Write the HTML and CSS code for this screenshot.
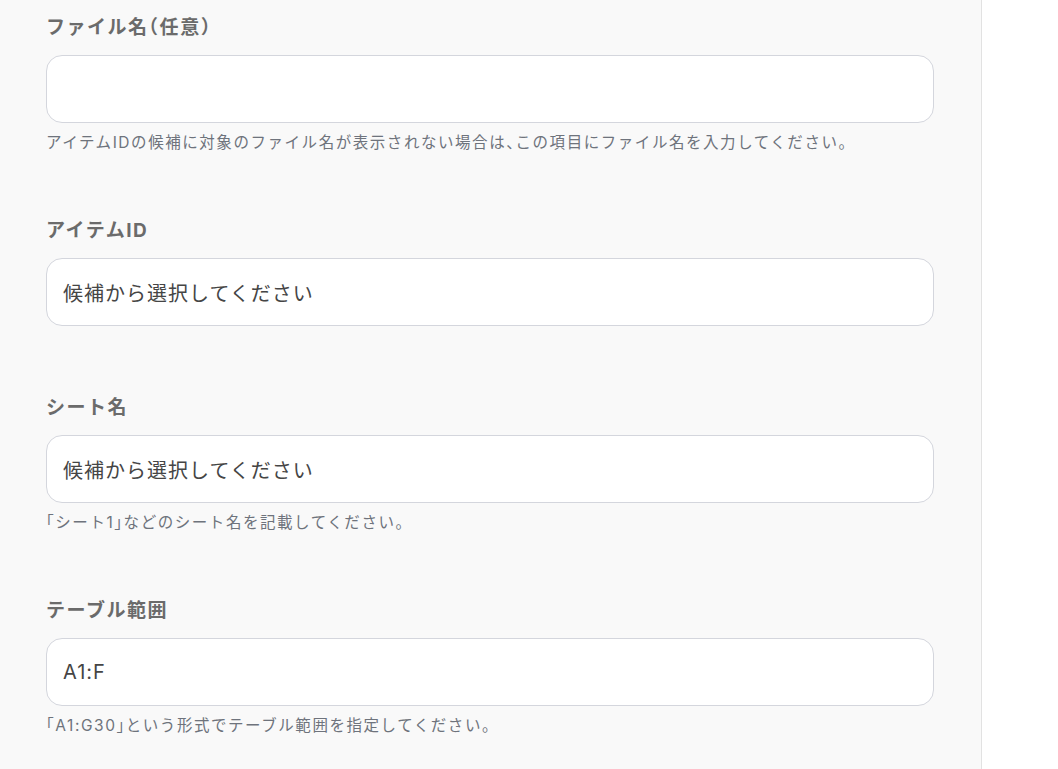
FILE: index.html
```html
<!DOCTYPE html>
<html lang="ja">
<head>
<meta charset="utf-8">
<link rel="stylesheet" href="styles.css">
</head>
<body>
<div class="page">
  <main class="panel">
    <form class="form">
      <div class="field">
        <label class="label">ファイル名（任意）</label>
        <div class="input"></div>
        <p class="help">アイテムIDの候補に対象のファイル名が表示されない場合は、この項目にファイル名を入力してください。</p>
      </div>
      <div class="field field--nohelp">
        <label class="label">アイテムID</label>
        <div class="input">候補から選択してください</div>
      </div>
      <div class="field">
        <label class="label">シート名</label>
        <div class="input">候補から選択してください</div>
        <p class="help">「シート1」などのシート名を記載してください。</p>
      </div>
      <div class="field">
        <label class="label">テーブル範囲</label>
        <div class="input">A1:F</div>
        <p class="help">「A1:G30」という形式でテーブル範囲を指定してください。</p>
      </div>
    </form>
  </main>
  <aside class="side"></aside>
</div>
</body>
</html>
```
FILE: styles.css
```css
* { box-sizing: border-box; }
html, body { margin: 0; padding: 0; height: 100%; }
body {
  font-family: Inter, "Noto Sans CJK JP", sans-serif;
  background: #ffffff;
  overflow: hidden;
}
.page {
  display: flex;
  height: 769px;
}
.panel {
  width: 982px;
  flex: none;
  background: #f9f9f9;
  border-right: 1px solid #e2e2e2;
  padding: 16px 0 0 46px;
}
.form {
  display: flex;
  flex-direction: column;
  width: 888px;
}
.field {
  display: flex;
  flex-direction: column;
  margin-bottom: 66px;
}
.field--nohelp { margin-bottom: 70px; }
.label {
  font-size: 19px;
  font-weight: 700;
  line-height: 24px;
  letter-spacing: 0.08em;
  color: #6b6b6b;
  margin-bottom: 15px;
  font-feature-settings: "halt";
}
.input {
  height: 68px;
  background: #ffffff;
  border: 1px solid #d4d6dd;
  border-radius: 16px;
  padding: 0 16px;
  display: flex;
  align-items: center;
  font-size: 20px;
  letter-spacing: 0.05em;
  color: #454545;
}
.help {
  margin: 10px 0 0;
  font-size: 15.5px;
  line-height: 20px;
  letter-spacing: 0.1em;
  color: #6e737c;
  font-feature-settings: "halt";
}
.side { flex: 1; background: #ffffff; }
```
